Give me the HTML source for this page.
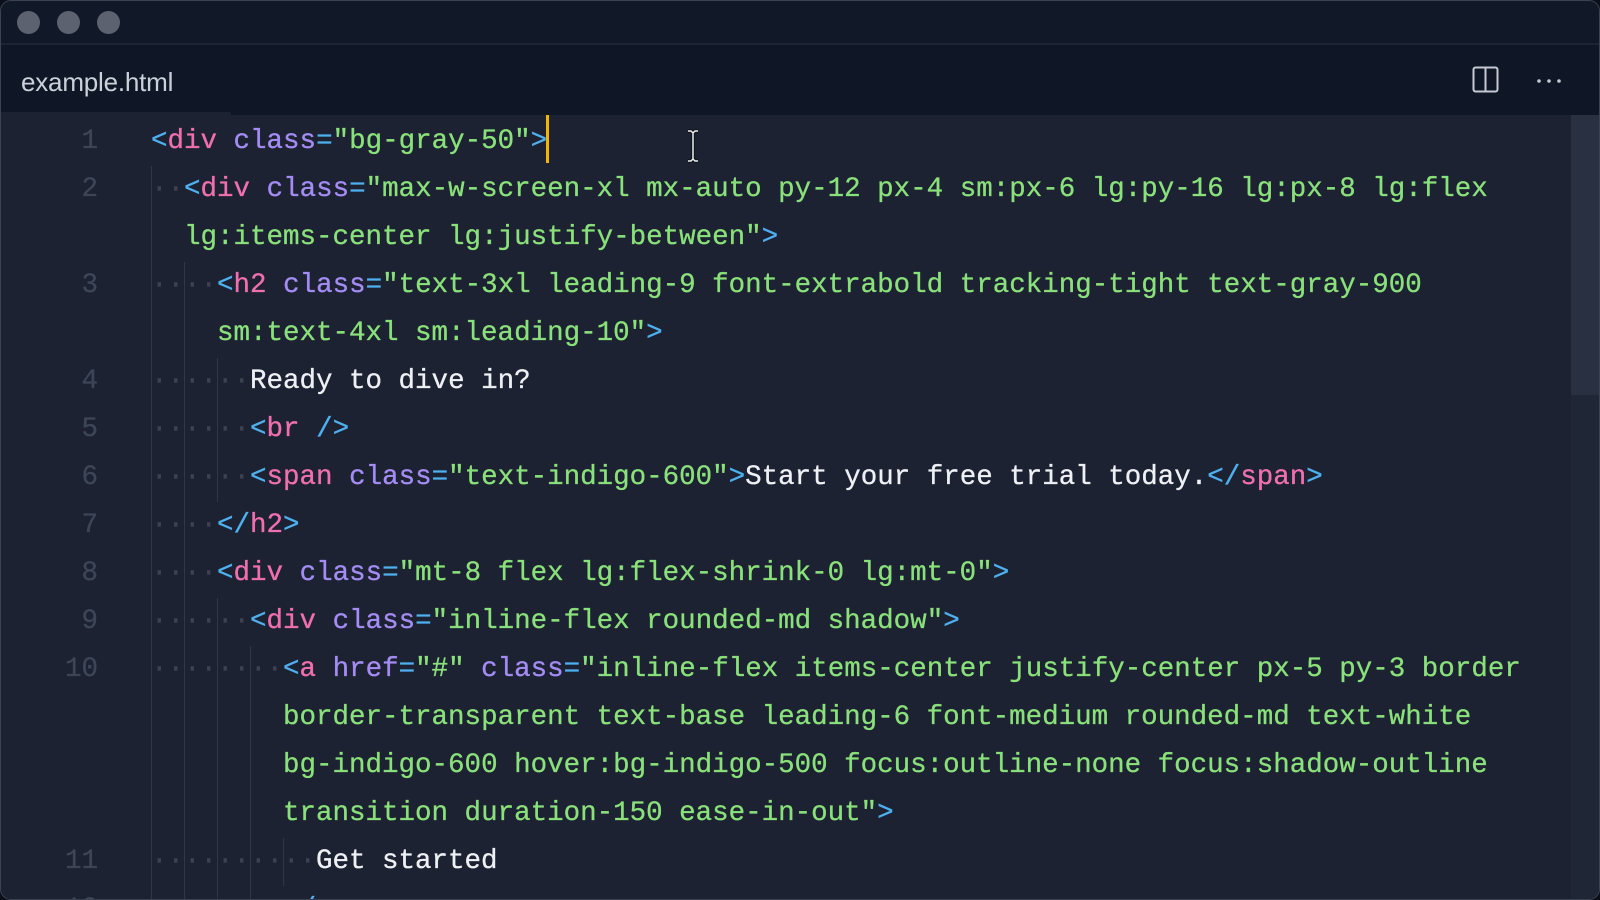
<!DOCTYPE html>
<html><head><meta charset="utf-8"><style>
html,body{margin:0;padding:0;background:#0b0f17;}
body{width:1600px;height:900px;overflow:hidden;position:relative;}
.win{position:absolute;left:0;top:0;width:1598px;height:898px;border:1px solid #3b4252;border-radius:11px;overflow:hidden;background:#1c2231;}
.title{position:absolute;left:0;top:0;right:0;height:42px;background:#111827;border-bottom:2px solid #1d2535;}
.dot{position:absolute;top:10px;width:23px;height:23px;border-radius:50%;background:#5c6270;}
.tabs{position:absolute;left:0;top:44px;right:0;height:70px;background:#0f1726;}
.tabname{position:absolute;left:20px;top:22px;font:26px "Liberation Sans",sans-serif;color:#cbd1da;letter-spacing:-0.2px;}
.tabline{position:absolute;left:0;top:67px;width:230px;height:3px;background:#1c2231;}
.code{position:absolute;left:0;top:114px;right:0;bottom:0;background:#1c2231;}
.sb{position:absolute;right:0;top:114px;width:28px;height:280px;background:#283041;}
.sbt{position:absolute;right:0;top:114px;width:28px;bottom:0;background:#1f2636;}
.row{position:absolute;left:0;height:48px;font:27.5px "Liberation Mono",monospace;line-height:48px;white-space:pre;color:#e8ebf0;-webkit-text-stroke:0.3px;}
.ln{position:absolute;left:0;width:97px;text-align:right;color:#3d4558;font:27.5px "Liberation Mono",monospace;line-height:48px;}
.tx{position:absolute;left:150px;top:0;line-height:48px;}
.g{position:absolute;left:150px;top:0;height:48px;background:repeating-linear-gradient(to right,#2e3647 0 1px,transparent 1px 33px);background-repeat:no-repeat;}
.d{color:#3a4254}
.p{color:#4fb0f0}.t{color:#f06fb0}.a{color:#a48cf4}.s{color:#8ae07a}.w{color:#eef0f4}
</style></head><body>
<div class="win">
<div class="title"><div class="dot" style="left:16px"></div><div class="dot" style="left:56px"></div><div class="dot" style="left:96px"></div></div>
<div class="tabs"><div class="tabname">example.html</div><div class="tabline"></div>
<svg style="position:absolute;left:1471px;top:21px" width="28" height="28" viewBox="0 0 28 28"><rect x="1.5" y="1.5" width="24" height="24" rx="2" fill="none" stroke="#c4c9d2" stroke-width="2"/><line x1="13.5" y1="2" x2="13.5" y2="25" stroke="#c4c9d2" stroke-width="2"/></svg>
<svg style="position:absolute;left:1535px;top:32px" width="28" height="8"><circle cx="3" cy="4" r="1.8" fill="#c4c9d2"/><circle cx="13" cy="4" r="1.8" fill="#c4c9d2"/><circle cx="23" cy="4" r="1.8" fill="#c4c9d2"/></svg>
</div>
<div class="code"></div>
<div class="sbt"></div><div class="sb"></div>

<div class="row" style="top:117px;width:1560px"><div class="ln">1</div><div class="tx"><span class="p">&lt;</span><span class="t">div</span> <span class="a">class</span><span class="p">=</span><span class="s">"bg-gray-50"</span><span class="p">&gt;</span></div></div>
<div style="position:absolute;left:545px;top:114px;width:3px;height:48px;background:#f5b400"></div>

<div class="row" style="top:165px"><div class="g" style="width:2px"></div><div class="ln">2</div><div class="tx"><span class="d">··</span><span class="p">&lt;</span><span class="t">div</span> <span class="a">class</span><span class="p">=</span><span class="s">"max-w-screen-xl mx-auto py-12 px-4 sm:px-6 lg:py-16 lg:px-8 lg:flex</span></div></div>
<div class="row" style="top:213px"><div class="g" style="width:2px"></div><div class="tx">  <span class="s">lg:items-center lg:justify-between"</span><span class="p">&gt;</span></div></div>

<div class="row" style="top:261px"><div class="g" style="width:35px"></div><div class="ln">3</div><div class="tx"><span class="d">····</span><span class="p">&lt;</span><span class="t">h2</span> <span class="a">class</span><span class="p">=</span><span class="s">"text-3xl leading-9 font-extrabold tracking-tight text-gray-900</span></div></div>
<div class="row" style="top:309px"><div class="g" style="width:35px"></div><div class="tx">    <span class="s">sm:text-4xl sm:leading-10"</span><span class="p">&gt;</span></div></div>

<div class="row" style="top:357px"><div class="g" style="width:68px"></div><div class="ln">4</div><div class="tx"><span class="d">······</span><span class="w">Ready to dive in?</span></div></div>
<div class="row" style="top:405px"><div class="g" style="width:68px"></div><div class="ln">5</div><div class="tx"><span class="d">······</span><span class="p">&lt;</span><span class="t">br</span> <span class="p">/&gt;</span></div></div>
<div class="row" style="top:453px"><div class="g" style="width:68px"></div><div class="ln">6</div><div class="tx"><span class="d">······</span><span class="p">&lt;</span><span class="t">span</span> <span class="a">class</span><span class="p">=</span><span class="s">"text-indigo-600"</span><span class="p">&gt;</span><span class="w">Start your free trial today.</span><span class="p">&lt;/</span><span class="t">span</span><span class="p">&gt;</span></div></div>
<div class="row" style="top:501px"><div class="g" style="width:35px"></div><div class="ln">7</div><div class="tx"><span class="d">····</span><span class="p">&lt;/</span><span class="t">h2</span><span class="p">&gt;</span></div></div>
<div class="row" style="top:549px"><div class="g" style="width:35px"></div><div class="ln">8</div><div class="tx"><span class="d">····</span><span class="p">&lt;</span><span class="t">div</span> <span class="a">class</span><span class="p">=</span><span class="s">"mt-8 flex lg:flex-shrink-0 lg:mt-0"</span><span class="p">&gt;</span></div></div>
<div class="row" style="top:597px"><div class="g" style="width:68px"></div><div class="ln">9</div><div class="tx"><span class="d">······</span><span class="p">&lt;</span><span class="t">div</span> <span class="a">class</span><span class="p">=</span><span class="s">"inline-flex rounded-md shadow"</span><span class="p">&gt;</span></div></div>

<div class="row" style="top:645px"><div class="g" style="width:101px"></div><div class="ln">10</div><div class="tx"><span class="d">········</span><span class="p">&lt;</span><span class="t">a</span> <span class="a">href</span><span class="p">=</span><span class="s">"#"</span> <span class="a">class</span><span class="p">=</span><span class="s">"inline-flex items-center justify-center px-5 py-3 border</span></div></div>
<div class="row" style="top:693px"><div class="g" style="width:101px"></div><div class="tx">        <span class="s">border-transparent text-base leading-6 font-medium rounded-md text-white</span></div></div>
<div class="row" style="top:741px"><div class="g" style="width:101px"></div><div class="tx">        <span class="s">bg-indigo-600 hover:bg-indigo-500 focus:outline-none focus:shadow-outline</span></div></div>
<div class="row" style="top:789px"><div class="g" style="width:101px"></div><div class="tx">        <span class="s">transition duration-150 ease-in-out"</span><span class="p">&gt;</span></div></div>
<div class="row" style="top:837px"><div class="g" style="width:134px"></div><div class="ln">11</div><div class="tx"><span class="d">··········</span><span class="w">Get started</span></div></div>
<div class="row" style="top:885px"><div class="g" style="width:101px"></div><div class="ln">12</div><div class="tx"><span class="d">········</span><span class="p">&lt;/</span><span class="t">a</span><span class="p">&gt;</span></div></div>

<svg style="position:absolute;left:684px;top:128px" width="16" height="34" viewBox="0 0 16 34"><path d="M3 2h3l2 2 2-2h3M8 4v26M3 32h3l2-2 2 2h3" fill="none" stroke="#0b0f17" stroke-width="3.5"/><path d="M3 2h3l2 2 2-2h3M8 4v26M3 32h3l2-2 2 2h3" fill="none" stroke="#f2f2f2" stroke-width="1.5"/></svg>
</div>
</body></html>
